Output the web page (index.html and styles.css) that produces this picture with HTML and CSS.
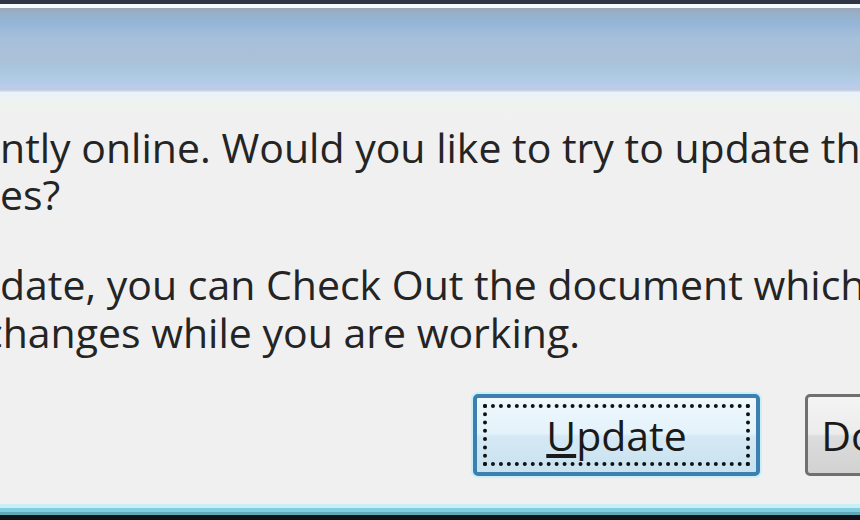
FILE: index.html
```html
<!DOCTYPE html>
<html lang="en">
<head>
  <meta charset="UTF-8">
  <title>Update Server</title>
  <link rel="stylesheet" href="styles.css">
</head>
<body>
  <div class="window">
    <div class="frame-top"></div>
    <div class="titlebar"></div>
    <div class="content">
      <p class="message">
        <span class="line">ntly online. Would you like to try to update the server with</span>
        <span class="line">es?</span>
      </p>
      <p class="message second">
        <span class="line">date, you can Check Out the document which prevents</span>
        <span class="line cut">changes while you are working.</span>
      </p>
      <div class="buttons">
        <button class="btn default"><span class="focus"><u>U</u>pdate</span></button>
        <button class="btn">Don't Update</button>
      </div>
    </div>
    <div class="frame-bottom"></div>
  </div>
</body>
</html>
```

FILE: styles.css
```css
* {
  margin: 0;
  padding: 0;
  box-sizing: border-box;
}

body {
  width: 860px;
  height: 520px;
  overflow: hidden;
  background: #f0f0f0;
  font-family: "Open Sans", "Noto Sans", sans-serif;
}

.window {
  display: flex;
  flex-direction: column;
  height: 520px;
}

.frame-top {
  height: 8px;
  border-top: 4px solid #2f3542;
  background: #f6fafd;
}

.titlebar {
  height: 84px;
  background: linear-gradient(to bottom,
    #9ca5b4 0px, #98afc8 5px, #94b5d6 14px, #9dbadb 22px,
    #a6bfda 30px, #aac1d8 50px, #a9c6dc 62px, #aecae2 68px,
    #b6ccea 76px, #c0cde2 82px, #dfe8f3 84px);
}

.content {
  flex: 1;
  display: flex;
  flex-direction: column;
  background: linear-gradient(to bottom, #eaf2fa 0px, #eef2ee 14px, #f0f0f0 30px);
  padding-top: 32px;
  color: #242424;
  font-size: 41px;
  line-height: 47px;
  white-space: nowrap;
}

.line {
  display: block;
}

.message.second {
  margin-top: 42px;
  line-height: 48px;
}

.cut {
  text-indent: -17px;
}

.buttons {
  display: flex;
  gap: 45px;
  margin-top: 38px;
  padding-left: 473px;
}

.btn {
  flex: none;
  height: 82px;
  font-family: inherit;
  font-size: 41px;
  color: #1a1a1a;
  border-radius: 5px;
  background: linear-gradient(to bottom, #f4f4f4 0%, #ececec 48%, #dcdcdc 52%, #d2d2d2 100%);
}

.btn.default {
  width: 287px;
  padding: 6px;
  border: 4px solid #3d7fae;
  box-shadow: 0 0 0 2px #c8f0fb;
  background: linear-gradient(to bottom, #eef8fd 0%, #e4f2fa 48%, #d5e9f4 52%, #c8e2f0 100%);
}

.focus {
  display: flex;
  align-items: center;
  justify-content: center;
  height: 100%;
  border: 4px dotted #111;
}

.btn:not(.default) {
  width: 287px;
  border: 3px solid #707070;
}

.frame-bottom {
  height: 16px;
  background: linear-gradient(to bottom,
    #c8eff5 0px, #c8eff5 4px, #80cde0 4px, #80cde0 8px,
    #5fa8b8 8px, #5fa8b8 11px, #0e1216 11px);
}
```
